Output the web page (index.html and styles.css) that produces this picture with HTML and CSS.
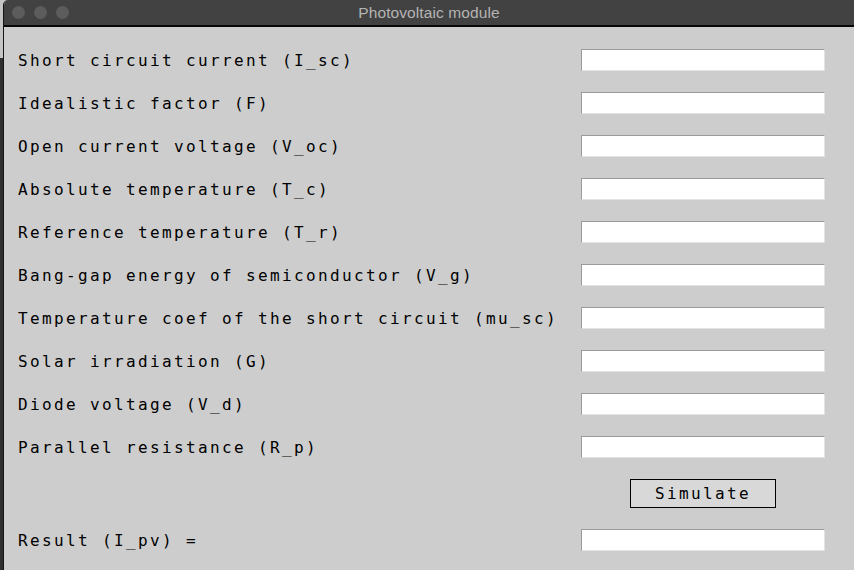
FILE: index.html
```html
<!DOCTYPE html>
<html>
<head>
<meta charset="utf-8">
<title>Photovoltaic module</title>
<link rel="stylesheet" href="styles.css">
</head>
<body>
<div class="screen">
  <div class="edge"></div>
  <div class="window">
    <div class="titlebar">
      <div class="lights"><span class="light"></span><span class="light"></span><span class="light"></span></div>
      <div class="title">Photovoltaic module</div>
      <div></div>
    </div>
    <div class="content">
      <div class="row"><span class="label">Short circuit current (I_sc)</span><input class="field" type="text"></div>
      <div class="row"><span class="label">Idealistic factor (F)</span><input class="field" type="text"></div>
      <div class="row"><span class="label">Open current voltage (V_oc)</span><input class="field" type="text"></div>
      <div class="row"><span class="label">Absolute temperature (T_c)</span><input class="field" type="text"></div>
      <div class="row"><span class="label">Reference temperature (T_r)</span><input class="field" type="text"></div>
      <div class="row"><span class="label">Bang-gap energy of semiconductor (V_g)</span><input class="field" type="text"></div>
      <div class="row"><span class="label">Temperature coef of the short circuit (mu_sc)</span><input class="field" type="text"></div>
      <div class="row"><span class="label">Solar irradiation (G)</span><input class="field" type="text"></div>
      <div class="row"><span class="label">Diode voltage (V_d)</span><input class="field" type="text"></div>
      <div class="row"><span class="label">Parallel resistance (R_p)</span><input class="field" type="text"></div>
      <div class="button-row"><button class="btn" type="button">Simulate</button></div>
      <div class="row result"><span class="label">Result (I_pv) =</span><input class="field" type="text"></div>
    </div>
  </div>
</div>
</body>
</html>
```
FILE: styles.css
```css
html, body {
  margin: 0;
  padding: 0;
  height: 100%;
}
body {
  background: #cdcdcd;
  overflow: hidden;
}
.screen {
  display: flex;
  width: 854px;
  height: 570px;
}
.edge {
  width: 3px;
  flex: none;
  background: linear-gradient(#c4c4c4 0 58px, #2e2e2e 58px);
}
.window {
  flex: 1;
  display: flex;
  flex-direction: column;
  background: #cdcdcd;
  border-left: 1px solid #151515;
  border-top-left-radius: 5px;
  overflow: hidden;
}
.titlebar {
  height: 25px;
  flex: none;
  background: #424242;
  border-top: 1px solid #4d4d4d;
  border-bottom: 2px solid #070707;
  box-sizing: content-box;
  display: grid;
  grid-template-columns: 1fr auto 1fr;
  align-items: center;
  margin-top: -1px;
}
.lights {
  display: flex;
  gap: 9px;
  padding-left: 8px;
}
.light {
  width: 13px;
  height: 13px;
  border-radius: 50%;
  background: #5c5c5c;
}
.title {
  font-family: "Liberation Sans", Arial, sans-serif;
  font-size: 15.5px;
  color: #b4b4b4;
  letter-spacing: 0.1px;
}
.content {
  padding: 12px 29px 0 14px;
  display: flex;
  flex-direction: column;
}
.row {
  display: grid;
  grid-template-columns: 1fr 244px;
  height: 43px;
  align-items: center;
}
.label, .btn {
  font-family: "DejaVu Sans Mono", monospace;
  font-size: 16px;
  letter-spacing: 2.37px;
  color: #000;
  white-space: pre;
}
.field {
  align-self: start;
  margin: 10px 0 0 0;
  width: 244px;
  height: 22px;
  box-sizing: border-box;
  padding: 0;
  background: #fff;
  border: 1px solid;
  border-color: #9a9a9a #e3e3e3 #e3e3e3 #9a9a9a;
  outline: none;
}
.button-row {
  display: grid;
  grid-template-columns: 1fr 244px;
  margin-top: 10px;
}
.btn {
  grid-column: 2;
  justify-self: center;
  width: 146px;
  height: 29px;
  box-sizing: border-box;
  border: 1px solid #000;
  background: #d8d8d8;
  padding: 0;
  margin: 0;
  text-align: center;
}
.result {
  margin-top: 11px;
}
```
